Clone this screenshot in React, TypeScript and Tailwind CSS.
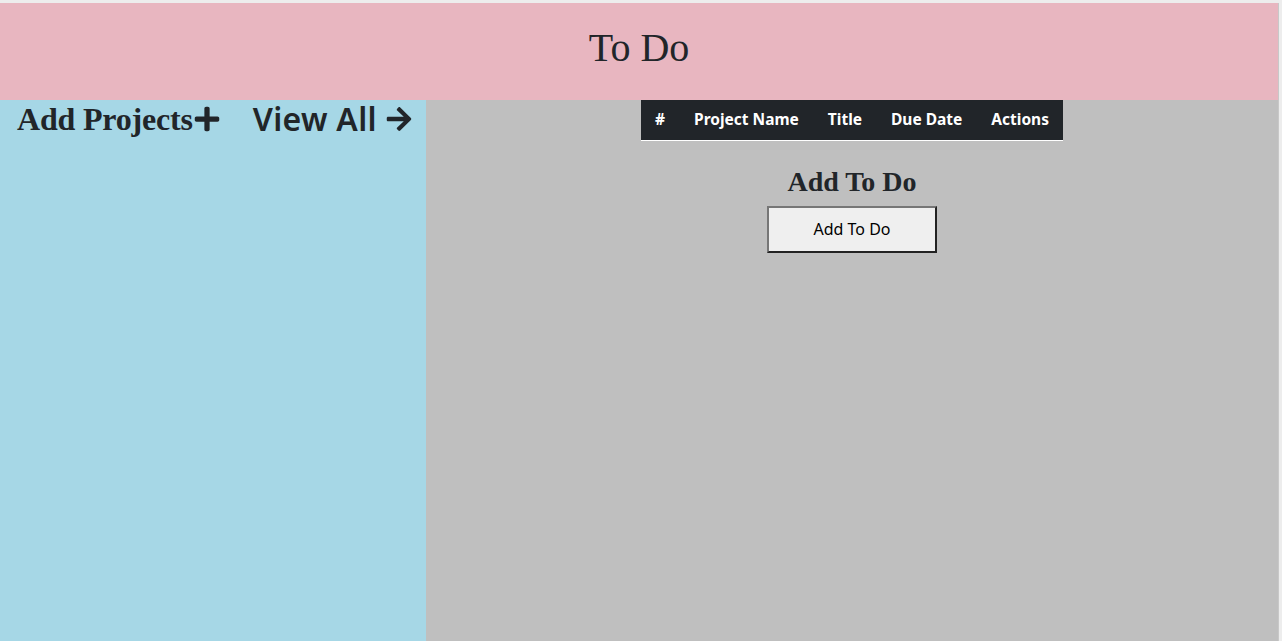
import React from "react";
import { FaPlus, FaArrowRight } from "react-icons/fa";

const serif = { fontFamily: '"Liberation Serif", "Times New Roman", serif' };
const sans = { fontFamily: '"Noto Sans", "Open Sans", sans-serif' };

const columns = ["#", "Project Name", "Title", "Due Date", "Actions"];

const App: React.FC = () => {
  return (
    <div className="w-[1282px] h-[641px] overflow-hidden bg-[#ededed] pt-[3px] pr-[3px] flex">
      <div className="w-[1279px] h-full flex flex-col text-[#212529] border-r border-[#c8c8c8]">
        {/* Header */}
        <header className="h-[97px] bg-[#e8b6c0] flex items-center justify-center">
          <h1 className="text-[40px] font-normal leading-none mt-[-8px]" style={serif}>
            To Do
          </h1>
        </header>

        <div className="flex flex-1">
          {/* Sidebar */}
          <aside className="w-[426px] bg-[#a6d7e6] flex items-start pl-[17px]">
            <h2 className="text-[32px] font-bold leading-[38px] flex items-center tracking-[-0.2px]" style={serif}>
              Add Projects
              <FaPlus className="w-[28px] h-[28px]" />
            </h2>
            <h2
              className="ml-[32px] text-[32px] font-semibold leading-[38px] flex items-center tracking-[0.3px]"
              style={sans}
            >
              View All
              <FaArrowRight className="w-[30px] h-[28px] ml-[7px]" />
            </h2>
          </aside>

          {/* Main */}
          <main className="flex-1 bg-[#bfbfbf] flex flex-col items-center">
            <table className="bg-[#212529] text-white border-b border-white" style={sans}>
              <thead>
                <tr className="h-[40px]">
                  {columns.map((c) => (
                    <th key={c} className="px-[14.5px] text-[15.5px] font-bold whitespace-nowrap">
                      {c}
                    </th>
                  ))}
                </tr>
              </thead>
            </table>

            <h3 className="mt-[25px] text-[28px] font-bold leading-[32px]" style={serif}>
              Add To Do
            </h3>
            <button
              className="mt-[8px] w-[170px] h-[47px] bg-[#efefef] text-black text-[16px] border-2 border-[#767676] border-r-[#222] border-b-[#222]"
              style={sans}
            >
              Add To Do
            </button>
          </main>
        </div>
      </div>
    </div>
  );
};

export default App;
